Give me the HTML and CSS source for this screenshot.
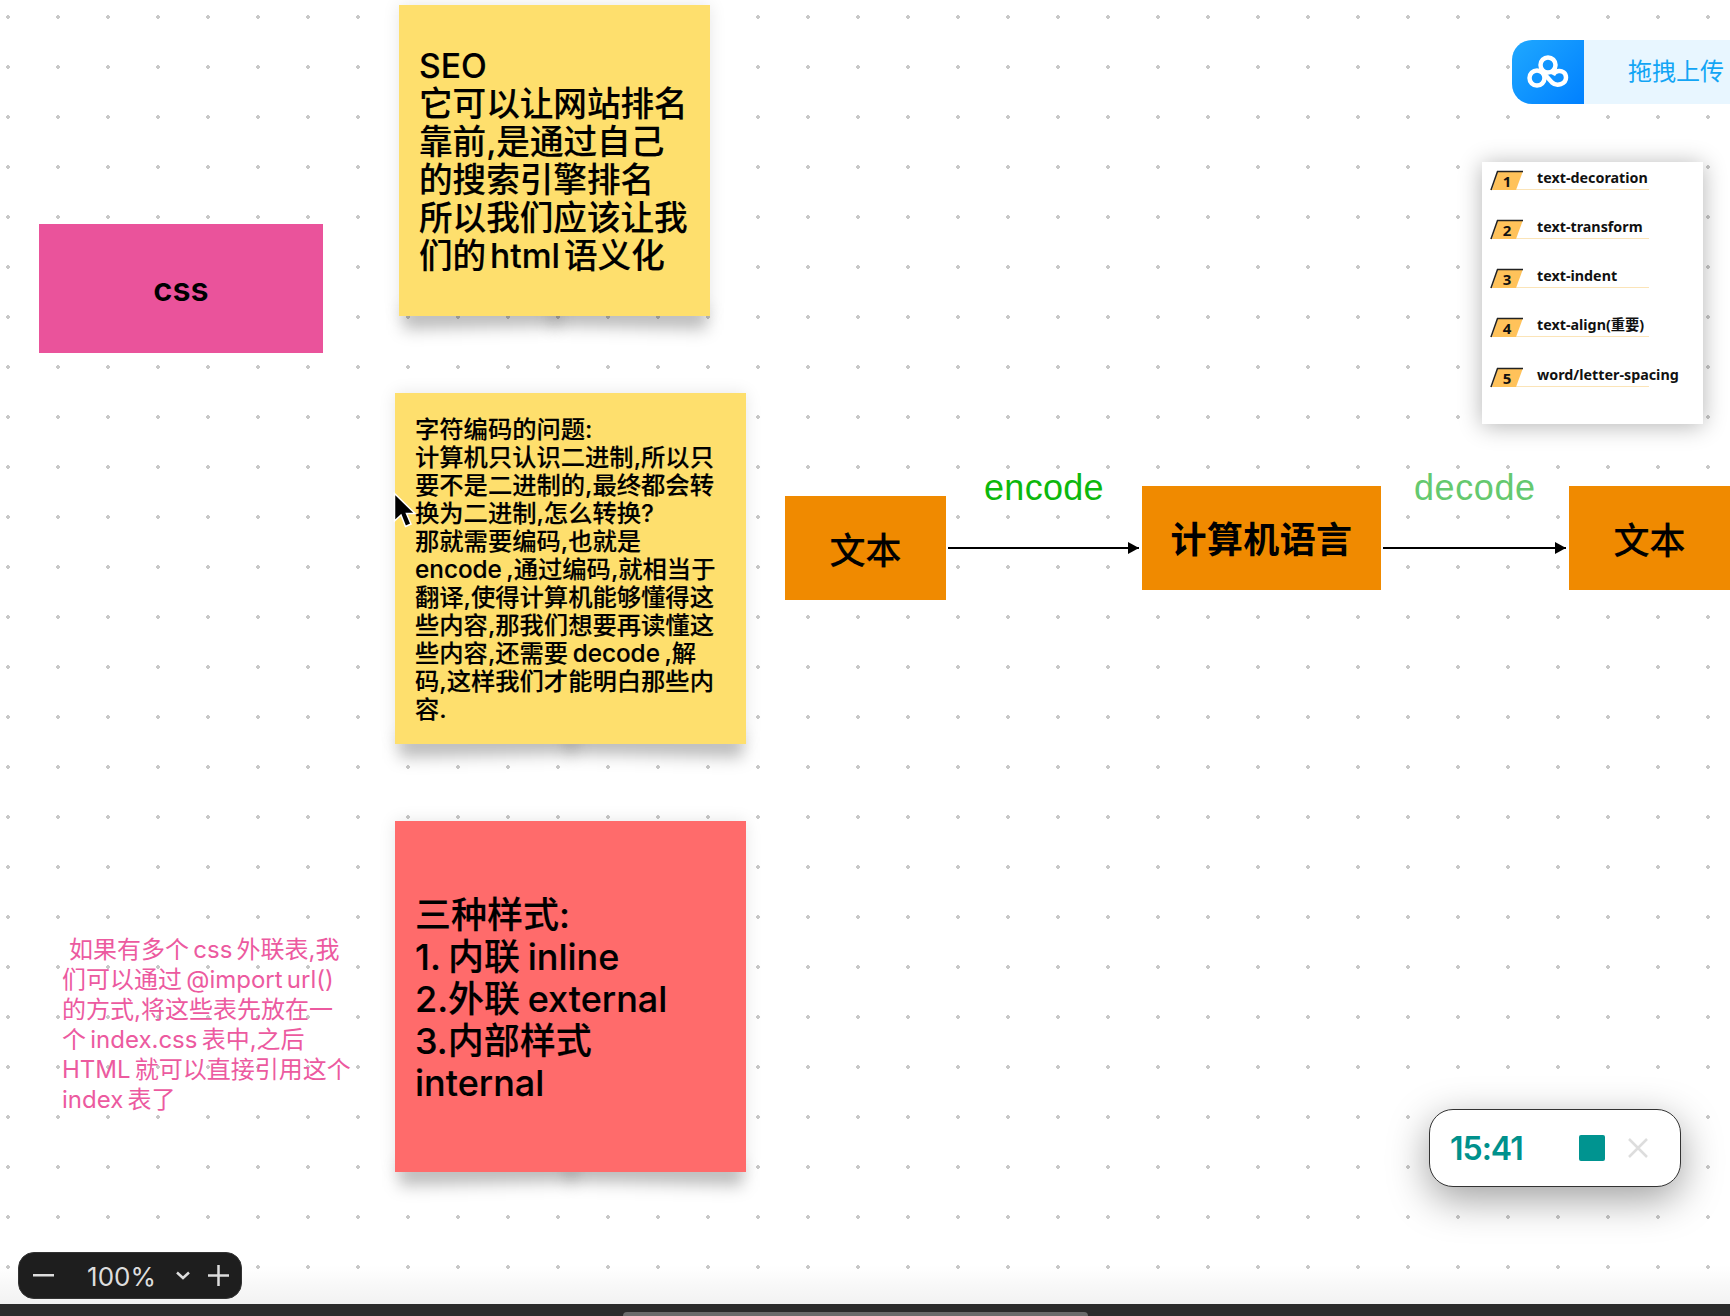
FILE: index.html
```html
<!DOCTYPE html>
<html lang="zh-CN">
<head>
    <meta charset="UTF-8">
    <title>CSS 笔记白板</title>
    <link rel="stylesheet" href="styles.css">
</head>
<body>
    <div class="board">
        <div class="node css-box">css</div>

        <div class="node note note-seo"><div>SEO<br>它可以让网站排名<br>靠前,是通过自己<br>的搜索引擎排名<br>所以我们应该让我<br>们的 html 语义化</div></div>

        <div class="node note note-encode"><div>字符编码的问题:<br>计算机只认识二进制,所以只<br>要不是二进制的,最终都会转<br>换为二进制,怎么转换?<br>那就需要编码,也就是<br>encode ,通过编码,就相当于<br>翻译,使得计算机能够懂得这<br>些内容,那我们想要再读懂这<br>些内容,还需要 decode ,解<br>码,这样我们才能明白那些内<br>容.</div></div>

        <div class="node note note-styles"><div>三种样式:<br>1. 内联 inline<br>2.外联 external<br>3.内部样式<br>internal</div></div>

        <div class="node pink-text"><span class="pink-indent"></span>如果有多个 css 外联表,我<br>们可以通过 @import url()<br>的方式,将这些表先放在一<br>个 index.css 表中,之后<br>HTML 就可以直接引用这个<br>index 表了</div>

        <div class="node box box-text1">文本</div>
        <div class="node flow-label label-encode">encode</div>
        <div class="node arrow arrow-1"></div>
        <div class="node box box-lang">计算机语言</div>
        <div class="node flow-label label-decode">decode</div>
        <div class="node arrow arrow-2"></div>
        <div class="node box box-text2">文本</div>

        <div class="node upload">
            <div class="upload-icon">
                <svg width="42" height="34" viewBox="0 0 42 34" fill="none" stroke="#fff" stroke-width="4.500">
                    <circle cx="21" cy="10" r="7.500"/>
                    <circle cx="10" cy="23" r="7.500"/>
                    <path d="M16 17.500 L25 27.500 C30 32 39 29 39 22.500 C39 17.500 35 15.500 31.500 16 C29 16.300 27 18 26 20"/>
                </svg>
            </div>
            <div class="upload-text">拖拽上传</div>
        </div>

        <div class="node toc">
            <div class="toc-item">
                <svg class="toc-tag" width="34" height="21" viewBox="0 0 34 21"><path d="M8 1 H33 L26 20 H2 Z" fill="#ffc25a"/><path d="M1 20 L7.500 1.500 H33" fill="none" stroke="#222" stroke-width="1.500"/></svg>
                <span class="toc-num">1</span><span class="toc-name">text-decoration</span>
            </div>
            <div class="toc-item">
                <svg class="toc-tag" width="34" height="21" viewBox="0 0 34 21"><path d="M8 1 H33 L26 20 H2 Z" fill="#ffc25a"/><path d="M1 20 L7.500 1.500 H33" fill="none" stroke="#222" stroke-width="1.500"/></svg>
                <span class="toc-num">2</span><span class="toc-name">text-transform</span>
            </div>
            <div class="toc-item">
                <svg class="toc-tag" width="34" height="21" viewBox="0 0 34 21"><path d="M8 1 H33 L26 20 H2 Z" fill="#ffc25a"/><path d="M1 20 L7.500 1.500 H33" fill="none" stroke="#222" stroke-width="1.500"/></svg>
                <span class="toc-num">3</span><span class="toc-name">text-indent</span>
            </div>
            <div class="toc-item">
                <svg class="toc-tag" width="34" height="21" viewBox="0 0 34 21"><path d="M8 1 H33 L26 20 H2 Z" fill="#ffc25a"/><path d="M1 20 L7.500 1.500 H33" fill="none" stroke="#222" stroke-width="1.500"/></svg>
                <span class="toc-num">4</span><span class="toc-name">text-align(重要)</span>
            </div>
            <div class="toc-item">
                <svg class="toc-tag" width="34" height="21" viewBox="0 0 34 21"><path d="M8 1 H33 L26 20 H2 Z" fill="#ffc25a"/><path d="M1 20 L7.500 1.500 H33" fill="none" stroke="#222" stroke-width="1.500"/></svg>
                <span class="toc-num">5</span><span class="toc-name">word/letter-spacing</span>
            </div>
        </div>

        <div class="node timer">
            <span class="timer-time">15:41</span>
            <span class="timer-stop"></span>
            <svg class="timer-close" width="20" height="20" viewBox="0 0 20 20" stroke="#ddd" stroke-width="2.500">
                <path d="M1 1 L19 19 M19 1 L1 19"/>
            </svg>
        </div>

        <div class="node zoom-bar">
            <svg width="21" height="3" viewBox="0 0 21 3"><rect width="21" height="2.500" fill="#ddd"/></svg>
            <span class="zoom-value">100%</span>
            <svg class="zoom-chevron" width="14" height="9" viewBox="0 0 14 9" fill="none" stroke="#ddd" stroke-width="2.500"><path d="M1 1.500 L7 7 L13 1.500"/></svg>
            <svg width="21" height="21" viewBox="0 0 21 21" stroke="#ddd" stroke-width="2.500"><path d="M0 10.500 H21 M10.500 0 V21"/></svg>
        </div>

        <svg class="node cursor" width="24" height="38" viewBox="0 0 24 38">
            <path d="M1.500 1.500 V29 L8 23 L12.500 34.500 L18 32 L13.500 21.500 L22 21.500 Z" fill="#000" stroke="#fff" stroke-width="1.500"/>
        </svg>

        <div class="scrollbar"><div class="scroll-thumb"></div></div>
    </div>
</body>
</html>
```
FILE: styles.css
```css
* {
    box-sizing: border-box;
}

html, body {
    margin: 0;
    padding: 0;
    background-color: #fff;
}

body {
    font-family: Inter, "Noto Sans CJK SC", sans-serif;
    color: #000;
}

.board {
    position: relative;
    isolation: isolate;
    width: 1730px;
    height: 1316px;
    overflow: hidden;
    background-image:
        linear-gradient(to bottom, rgba(0, 0, 0, 0) 1265px, rgba(0, 0, 0, 0.05) 1304px),
        radial-gradient(circle 2px at 8px 17px, #c8c8c8 90%, rgba(200, 200, 200, 0));
    background-size: 100% 100%, 50px 50px;
}

.node {
    position: absolute;
}

.css-box {
    left: 39px;
    top: 224px;
    width: 284px;
    height: 129px;
    display: flex;
    align-items: center;
    justify-content: center;
    background-color: #ea539b;
    font-size: 33px;
    font-weight: 600;
}

/* sticky notes */
.note {
    display: flex;
    align-items: center;
    white-space: nowrap;
    font-weight: 500;
    -webkit-text-stroke: 0.15px #000;
    box-shadow: 0 0 16px rgba(0, 0, 0, 0.1);
}

.note::before,
.note::after {
    content: "";
    position: absolute;
    z-index: -1;
    bottom: -12px;
    width: 50%;
    height: 22px;
    background-color: rgba(0, 0, 0, 0.24);
    filter: blur(8px);
}

.note::before {
    left: 4px;
    transform: rotate(-1.5deg);
}

.note::after {
    right: 4px;
    transform: rotate(1.5deg);
}

.note-seo {
    left: 399px;
    top: 5px;
    width: 311px;
    height: 311px;
    padding-left: 20px;
    background-color: #fedf6d;
    font-size: 33.600px;
    line-height: 38px;
    word-spacing: -5px;
}

.note-encode {
    left: 395px;
    top: 393px;
    width: 351px;
    height: 351px;
    padding-left: 20px;
    background-color: #fedf6d;
    font-size: 24.300px;
    line-height: 28px;
    word-spacing: -2px;
}

.note-styles {
    left: 395px;
    top: 821px;
    width: 351px;
    height: 351px;
    padding-left: 20px;
    padding-top: 4px;
    background-color: #ff6b6b;
    font-size: 36px;
    line-height: 42px;
    word-spacing: -2px;
}

.pink-text {
    left: 62px;
    top: 935px;
    white-space: nowrap;
    color: #ec5a9f;
    font-size: 24px;
    line-height: 30px;
    word-spacing: -2.500px;
}

.pink-indent {
    display: inline-block;
    width: 7px;
}

/* flow diagram */
.box {
    display: flex;
    align-items: center;
    justify-content: center;
    height: 104px;
    background-color: #f08a00;
    font-size: 36px;
    font-weight: 500;
    -webkit-text-stroke: 0.15px #000;
}

.box-text1 {
    left: 785px;
    top: 496px;
    width: 161px;
}

.box-lang {
    left: 1142px;
    top: 486px;
    width: 239px;
    padding-bottom: 2px;
    letter-spacing: 0.4px;
    font-weight: 700;
    -webkit-text-stroke: 0;
}

.box-text2 {
    left: 1569px;
    top: 486px;
    width: 161px;
}

.flow-label {
    top: 467px;
    font-family: "Liberation Sans", sans-serif;
    font-size: 36px;
    line-height: 42px;
    letter-spacing: 0.3px;
}

.label-encode {
    left: 984px;
    color: #0cb80c;
}

.label-decode {
    left: 1414px;
    color: #65c96f;
    letter-spacing: 0.6px;
}

.arrow {
    top: 547px;
    height: 2px;
    background-color: #000;
}

.arrow::after {
    content: "";
    position: absolute;
    right: 0;
    top: -5px;
    border-left: 11px solid #000;
    border-top: 6px solid transparent;
    border-bottom: 6px solid transparent;
}

.arrow-1 {
    left: 948px;
    width: 191px;
}

.arrow-2 {
    left: 1383px;
    width: 183px;
}

/* upload widget */
.upload {
    left: 1512px;
    top: 40px;
    width: 218px;
    height: 64px;
    display: flex;
    background-color: #e8f6ff;
    border-radius: 20px 0 0 20px;
}

.upload-icon {
    width: 72px;
    display: flex;
    align-items: center;
    justify-content: center;
    background: linear-gradient(135deg, #1fa8ff, #0080ff);
    border-radius: 20px 0 0 20px;
}

.upload-text {
    margin-left: 44px;
    line-height: 64px;
    font-size: 24px;
    color: #12a5f5;
}

/* text properties card */
.toc {
    left: 1482px;
    top: 162px;
    width: 221px;
    height: 262px;
    padding: 7.500px 0 0 8px;
    display: flex;
    flex-direction: column;
    gap: 29.250px;
    background-color: #fff;
    box-shadow: 0 2px 22px rgba(0, 0, 0, 0.3);
}

.toc-item {
    position: relative;
    display: flex;
    flex: none;
    align-items: flex-start;
    height: 20px;
    width: 159px;
    background: linear-gradient(#fbe4b8, #fbe4b8) left bottom / 100% 1px no-repeat;
    white-space: nowrap;
}

.toc-tag {
    flex: none;
}

.toc-num {
    position: absolute;
    left: 9px;
    top: 1px;
    width: 16px;
    text-align: center;
    font-family: "Noto Sans", sans-serif;
    font-size: 15px;
    font-weight: 700;
    line-height: 20px;
    color: #111;
}

.toc-name {
    flex: none;
    margin-left: 13px;
    margin-top: -2px;
    font-family: "Noto Sans", "Noto Sans CJK SC", sans-serif;
    font-size: 14.300px;
    font-weight: 700;
    line-height: 20px;
    color: #111;
}

/* timer */
.timer {
    left: 1429px;
    top: 1109px;
    width: 252px;
    height: 78px;
    display: flex;
    align-items: center;
    padding-left: 20px;
    background-color: #fff;
    border: 1px solid #333;
    border-radius: 24px;
    box-shadow: 0 12px 40px rgba(0, 0, 0, 0.38);
}

.timer-time {
    width: 129px;
    color: #00918c;
    font-size: 32px;
    font-weight: 600;
    letter-spacing: -1px;
}

.timer-stop {
    width: 26px;
    height: 26px;
    margin-right: 23px;
    background-color: #009490;
    border-radius: 2px;
}

/* zoom control */
.zoom-bar {
    left: 18px;
    top: 1252px;
    width: 224px;
    height: 47px;
    display: flex;
    align-items: center;
    padding-left: 14px;
    background-color: #1e1e1e;
    border: 1px solid #333;
    border-radius: 16px;
}

.zoom-value {
    width: 102px;
    padding-top: 2px;
    text-align: right;
    margin-right: 20px;
    color: #ddd;
    font-size: 26px;
}

.zoom-chevron {
    margin-right: 18px;
}

.cursor {
    left: 393px;
    top: 492px;
}

.scrollbar {
    position: absolute;
    left: 0;
    right: 0;
    bottom: 0;
    height: 12px;
    background-color: #2b2b2b;
    padding-left: 623px;
    padding-top: 8px;
}

.scroll-thumb {
    width: 465px;
    height: 4px;
    background-color: #6b6b6b;
    border-radius: 4px 4px 0 0;
}
```
